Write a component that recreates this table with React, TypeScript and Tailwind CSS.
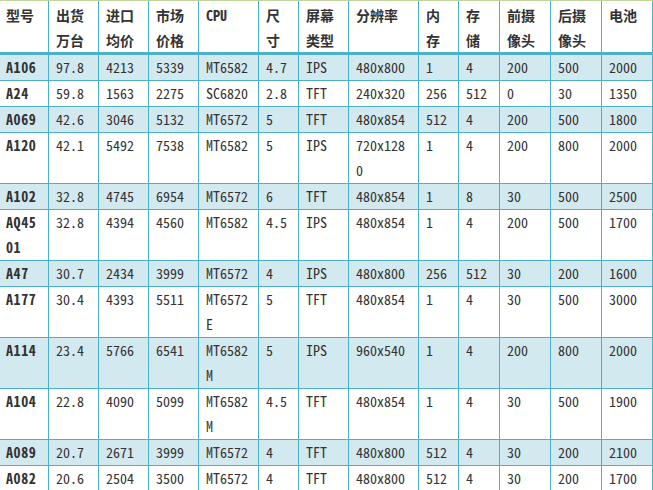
const headers = ["型号", "出货万台", "进口均价", "市场价格", "CPU", "尺寸", "屏幕类型", "分辨率", "内存", "存储", "前摄像头", "后摄像头", "电池"];

const rows: string[][] = [
  ["A106", "97.8", "4213", "5339", "MT6582", "4.7", "IPS", "480x800", "1", "4", "200", "500", "2000"],
  ["A24", "59.8", "1563", "2275", "SC6820", "2.8", "TFT", "240x320", "256", "512", "0", "30", "1350"],
  ["A069", "42.6", "3046", "5132", "MT6572", "5", "TFT", "480x854", "512", "4", "200", "500", "1800"],
  ["A120", "42.1", "5492", "7538", "MT6582", "5", "IPS", "720x1280", "1", "4", "200", "800", "2000"],
  ["A102", "32.8", "4745", "6954", "MT6572", "6", "TFT", "480x854", "1", "8", "30", "500", "2500"],
  ["AQ4501", "32.8", "4394", "4560", "MT6582", "4.5", "IPS", "480x854", "1", "4", "200", "500", "1700"],
  ["A47", "30.7", "2434", "3999", "MT6572", "4", "IPS", "480x800", "256", "512", "30", "200", "1600"],
  ["A177", "30.4", "4393", "5511", "MT6572E", "5", "TFT", "480x854", "1", "4", "30", "500", "3000"],
  ["A114", "23.4", "5766", "6541", "MT6582M", "5", "IPS", "960x540", "1", "4", "200", "800", "2000"],
  ["A104", "22.8", "4090", "5099", "MT6582M", "4.5", "TFT", "480x854", "1", "4", "30", "500", "1900"],
  ["A089", "20.7", "2671", "3999", "MT6572", "4", "TFT", "480x800", "512", "4", "30", "200", "2100"],
  ["A082", "20.6", "2504", "3500", "MT6572", "4", "TFT", "480x800", "512", "4", "30", "200", "1700"],
];

export default function App() {
  return (
    <div
      className="w-[653px] h-[490px] overflow-hidden bg-white text-[14px] text-[#333]"
      style={{ fontFamily: '"Noto Sans Mono CJK SC", "Noto Sans CJK SC", "Liberation Mono", monospace' }}
    >
      <div className="h-px bg-[#bfd59c]" />
      <div className="grid grid-cols-[49px_50px_50px_50px_60px_40px_50px_70px_40px_41px_51px_51px_51px]">
        {headers.map((h, i) => (
          <div
            key={h}
            className={`h-[54px] pt-[2px] ${i === 0 ? "pl-[6px]" : "pl-[7px]"} pr-[7px] border-r border-b-[3px] border-[#4bb0cc] font-bold leading-[25px] break-all`}
          >
            {h}
          </div>
        ))}
        {rows.map((r, ri) =>
          r.map((c, ci) => (
            <div
              key={ri + "-" + ci}
              className={`${ri % 2 === 0 ? "bg-[#d3e9f0]" : "bg-white"} ${ci === 0 ? "pl-[6px] font-bold tracking-[0.6px]" : "pl-[7px]"} pr-[7px] border-r border-b border-[#4bb0cc] leading-[25px] break-all`}
            >
              {c}
            </div>
          ))
        )}
      </div>
    </div>
  );
}
